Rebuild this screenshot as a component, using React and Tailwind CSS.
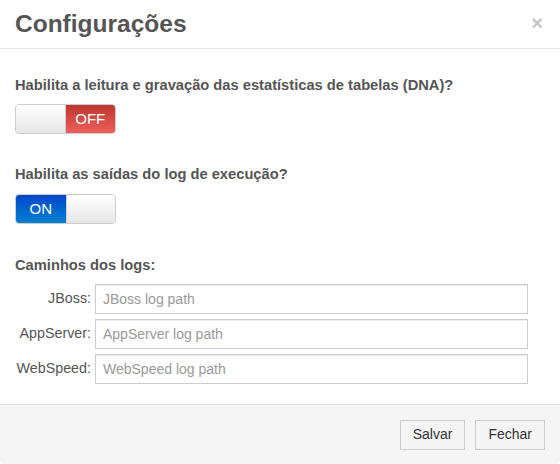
import React, { useState } from 'react';

const Toggle = ({ on, onChange }) => (
  <button
    onClick={() => onChange(!on)}
    className="flex w-[101px] h-[30px] rounded-[4px] border border-[#cccccc] overflow-hidden text-[15px] text-white"
  >
    {on ? (
      <>
        <span className="w-1/2 h-full flex items-center justify-center bg-gradient-to-b from-[#0044cc] to-[#0a80d0]">ON</span>
        <span className="w-1/2 h-full bg-gradient-to-b from-[#ffffff] to-[#e6e6e6] border-l border-[#d0d0d0]" />
      </>
    ) : (
      <>
        <span className="w-1/2 h-full bg-gradient-to-b from-[#ffffff] to-[#e6e6e6] border-r border-[#d0d0d0]" />
        <span className="w-1/2 h-full flex items-center justify-center bg-gradient-to-b from-[#bd362f] to-[#ee5f5b]">OFF</span>
      </>
    )}
  </button>
);

const PathRow = ({ label, placeholder }) => (
  <div className="flex items-center h-[30px]">
    <label className="w-[80px] text-right pr-[4px] text-[14.3px] text-[#555555]">{label}</label>
    <input
      type="text"
      placeholder={placeholder}
      className="w-[433px] h-[30px] border border-[#cccccc] px-[7px] text-[14px] text-[#555555] placeholder:text-[#999999] shadow-[inset_0_1px_1px_rgba(0,0,0,0.075)] outline-none"
    />
  </div>
);

export default function App() {
  const [dna, setDna] = useState(false);
  const [log, setLog] = useState(true);

  return (
    <div className="w-[560px] h-[464px] bg-white flex flex-col font-['Liberation_Sans',Arial,sans-serif] rounded-[4px] overflow-hidden">
      <div className="h-[49px] flex items-center justify-between pl-[15px] pr-[15px] border-b border-[#e5e5e5]">
        <h1 className="text-[24.5px] font-bold text-[#555555] leading-none pt-[1px]">Configurações</h1>
        <span className="text-[#c4c4c4] text-[20px] font-bold leading-none mb-[3px] mr-[2px]">×</span>
      </div>

      <div className="flex-1 px-[15px] pt-[27px]">
        <p className="text-[14.7px] font-bold text-[#555555] leading-[18px]">
          Habilita a leitura e gravação das estatísticas de tabelas (DNA)?
        </p>
        <div className="mt-[10px]">
          <Toggle on={dna} onChange={setDna} />
        </div>

        <p className="text-[14.7px] font-bold text-[#555555] leading-[18px] mt-[31px]">
          Habilita as saídas do log de execução?
        </p>
        <div className="mt-[11px]">
          <Toggle on={log} onChange={setLog} />
        </div>

        <p className="text-[14.7px] font-bold text-[#555555] leading-[18px] mt-[32px]">Caminhos dos logs:</p>
        <div className="flex flex-col gap-[5px] mt-[10px]">
          <PathRow label="JBoss:" placeholder="JBoss log path" />
          <PathRow label="AppServer:" placeholder="AppServer log path" />
          <PathRow label="WebSpeed:" placeholder="WebSpeed log path" />
        </div>
      </div>

      <div className="h-[60px] bg-[#f5f5f5] border-t border-[#dddddd] flex items-center justify-end gap-[10px] pr-[15px]">
        <button className="h-[30px] px-[12px] border border-[#cccccc] bg-[#f4f4f4] text-[14px] text-[#333333]">Salvar</button>
        <button className="h-[30px] px-[12px] border border-[#cccccc] bg-[#f4f4f4] text-[14px] text-[#333333]">Fechar</button>
      </div>
    </div>
  );
}
